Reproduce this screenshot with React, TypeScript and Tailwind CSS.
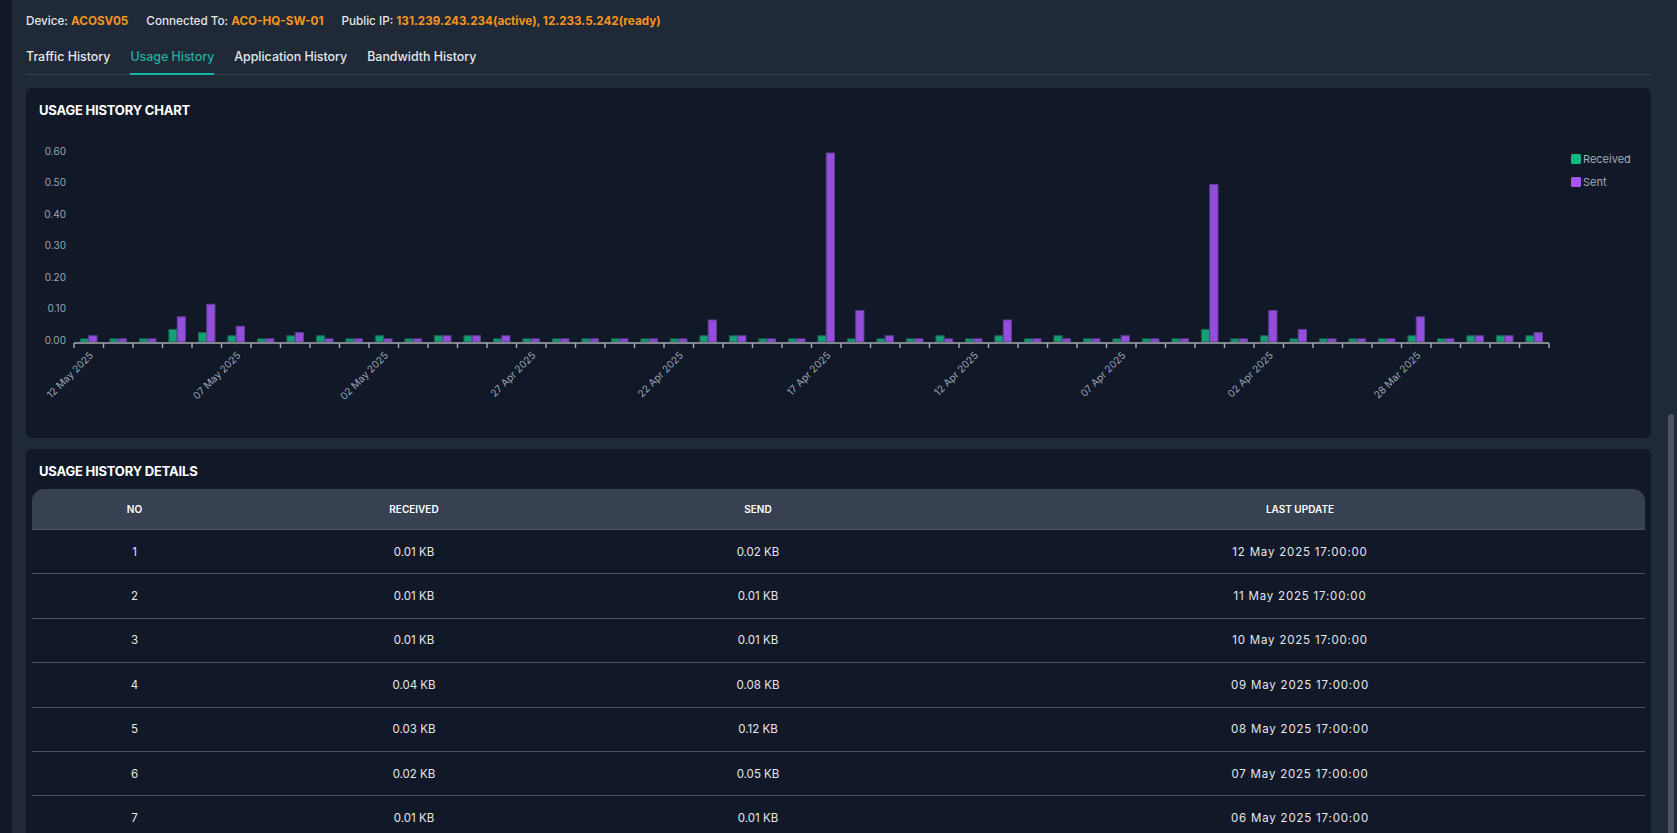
import React from "react";

const received = [
  0.01, 0.01, 0.01, 0.04, 0.03, 0.02, 0.01, 0.02, 0.02, 0.01, 0.02, 0.01, 0.02, 0.02, 0.01, 0.01, 0.01,
  0.01, 0.01, 0.01, 0.01, 0.02, 0.02, 0.01, 0.01, 0.02, 0.01, 0.01, 0.01, 0.02, 0.01, 0.02, 0.01, 0.02,
  0.01, 0.01, 0.01, 0.01, 0.04, 0.01, 0.02, 0.01, 0.01, 0.01, 0.01, 0.02, 0.01, 0.02, 0.02, 0.02,
];
const sent = [
  0.02, 0.01, 0.01, 0.08, 0.12, 0.05, 0.01, 0.03, 0.01, 0.01, 0.01, 0.01, 0.02, 0.02, 0.02, 0.01, 0.01,
  0.01, 0.01, 0.01, 0.01, 0.07, 0.02, 0.01, 0.01, 0.6, 0.1, 0.02, 0.01, 0.01, 0.01, 0.07, 0.01, 0.01,
  0.01, 0.02, 0.01, 0.01, 0.5, 0.01, 0.1, 0.04, 0.01, 0.01, 0.01, 0.08, 0.01, 0.02, 0.02, 0.03,
];
const dateLabels: Record<number, string> = {
  0: "12 May 2025",
  5: "07 May 2025",
  10: "02 May 2025",
  15: "27 Apr 2025",
  20: "22 Apr 2025",
  25: "17 Apr 2025",
  30: "12 Apr 2025",
  35: "07 Apr 2025",
  40: "02 Apr 2025",
  45: "28 Mar 2025",
};

const rows = [
  { no: 1, rx: "0.01 KB", tx: "0.02 KB", at: "12 May 2025 17:00:00" },
  { no: 2, rx: "0.01 KB", tx: "0.01 KB", at: "11 May 2025 17:00:00" },
  { no: 3, rx: "0.01 KB", tx: "0.01 KB", at: "10 May 2025 17:00:00" },
  { no: 4, rx: "0.04 KB", tx: "0.08 KB", at: "09 May 2025 17:00:00" },
  { no: 5, rx: "0.03 KB", tx: "0.12 KB", at: "08 May 2025 17:00:00" },
  { no: 6, rx: "0.02 KB", tx: "0.05 KB", at: "07 May 2025 17:00:00" },
  { no: 7, rx: "0.01 KB", tx: "0.01 KB", at: "06 May 2025 17:00:00" },
];

const font = { fontFamily: "Inter, 'Noto Sans', sans-serif" };

// chart geometry, in svg coords (svg sits 32px below the card top)
const X0 = 48;
const BAND = 29.5;
const Y0 = 222;
const PX = 315;

function UsageChart() {
  return (
    <svg width="1625" height="318" className="block" style={font}>
      {[0, 0.1, 0.2, 0.3, 0.4, 0.5, 0.6].map((v) => (
        <text key={v} x={40} y={Y0 - v * PX - 1} textAnchor="end" dominantBaseline="middle" fontSize="10" fill="#9aa5b8">
          {v.toFixed(2)}
        </text>
      ))}

      {received.map((r, i) => {
        const s = sent[i];
        const bx = X0 + i * BAND;
        return (
          <g key={i}>
            <rect x={bx + 6.4} y={Y0 - r * PX} width={8.3} height={r * PX} fill="#14a075" stroke="#1c6252" strokeWidth="1" />
            <rect x={bx + 14.7} y={Y0 - s * PX} width={8.3} height={s * PX} fill="#934fdb" stroke="#5d3c92" strokeWidth="1" />
          </g>
        );
      })}

      <line x1={X0} y1={Y0 + 1} x2={X0 + BAND * 50} y2={Y0 + 1} stroke="#80858e" strokeWidth="2" />
      {Array.from({ length: 51 }).map((_, i) => (
        <line key={i} x1={X0 + i * BAND} y1={Y0 + 1} x2={X0 + i * BAND} y2={Y0 + 6} stroke="#9ca3af" strokeWidth="1.5" />
      ))}

      {Object.entries(dateLabels).map(([k, label]) => {
        const cx = X0 + (Number(k) + 0.5) * BAND;
        const cy = Y0 + 9;
        return (
          <text
            key={k}
            x={cx}
            y={cy}
            dy="0.71em"
            textAnchor="end"
            fontSize="10"
            fill="#9aa5b8"
            transform={`rotate(-45 ${cx} ${cy})`}
          >
            {label}
          </text>
        );
      })}

      <rect x={1545} y={34} width={10} height={10} rx={1.5} fill="#10b981" />
      <text x={1557} y={40} dominantBaseline="middle" fontSize="11" fill="#a3aab8">
        Received
      </text>
      <rect x={1545} y={57} width={10} height={10} rx={1.5} fill="#a855f7" />
      <text x={1557} y={63} dominantBaseline="middle" fontSize="11" fill="#a3aab8">
        Sent
      </text>
    </svg>
  );
}

function Tab({ label, active }: { label: string; active?: boolean }) {
  return (
    <div
      className={
        "-mb-px border-b-2 pt-[1px] pb-[7px] text-[12.4px] leading-[18px] font-medium " +
        (active ? "border-[#14b8a6] text-[#1fb0a0]" : "border-transparent text-[#e5e7eb]")
      }
    >
      {label}
    </div>
  );
}

export default function App() {
  return (
    <div className="flex h-[833px] w-full overflow-hidden bg-[#111827]" style={font}>
      <div className="w-[12px] shrink-0" />

      <main className="flex min-w-0 flex-1 flex-col bg-[#1f2937] px-[14px]">
        <div className="flex items-center gap-[18px] pt-[12px] text-[11.7px] leading-[18px] font-medium text-[#e5e7eb]">
          <span>
            Device: <span className="font-bold text-[#f5951d]">ACOSV05</span>
          </span>
          <span>
            Connected To: <span className="font-bold text-[#f5951d]">ACO-HQ-SW-01</span>
          </span>
          <span>
            Public IP: <span className="font-bold text-[#f5951d]">131.239.243.234(active), 12.233.5.242(ready)</span>
          </span>
        </div>

        <div className="mt-[17px] flex gap-[20px] border-b border-[#374151]">
          <Tab label="Traffic History" />
          <Tab label="Usage History" active />
          <Tab label="Application History" />
          <Tab label="Bandwidth History" />
        </div>

        <section className="mt-[13px] h-[350px] shrink-0 overflow-hidden rounded-md bg-[#111827]">
          <h2 className="px-[13px] pt-[12px] text-[13px] leading-[20px] font-bold tracking-[-0.2px] text-white">USAGE HISTORY CHART</h2>
          <UsageChart />
        </section>

        <section className="mt-[11px] flex-1 rounded-md bg-[#111827]">
          <h2 className="px-[13px] pt-[12px] text-[13px] leading-[20px] font-bold tracking-[-0.2px] text-white">USAGE HISTORY DETAILS</h2>
          <div className="mt-[8px] px-[6px]">
            <div className="grid h-[41px] grid-cols-[205px_354px_334px_1fr] items-center rounded-t-[12px] border-b border-[#4b5563] bg-[#374151] text-center text-[10px] font-semibold text-white">
              <div>NO</div>
              <div>RECEIVED</div>
              <div>SEND</div>
              <div className="pl-[30px]">LAST UPDATE</div>
            </div>
            {rows.map((r) => (
              <div
                key={r.no}
                className="grid h-[44.4px] grid-cols-[205px_354px_334px_1fr] items-center border-b border-[#4b5563] pt-[1px] text-center text-[11.5px] text-[#e5e7eb]"
              >
                <div>{r.no}</div>
                <div>{r.rx}</div>
                <div>{r.tx}</div>
                <div className="pl-[30px] tracking-[0.8px]">{r.at}</div>
              </div>
            ))}
          </div>
        </section>
      </main>

      <div className="flex w-[12px] shrink-0 justify-center bg-[#1f2937]">
        <div className="mt-[414px] h-[440px] w-[6px] rounded-full bg-[#4f555e]" />
      </div>
    </div>
  );
}
